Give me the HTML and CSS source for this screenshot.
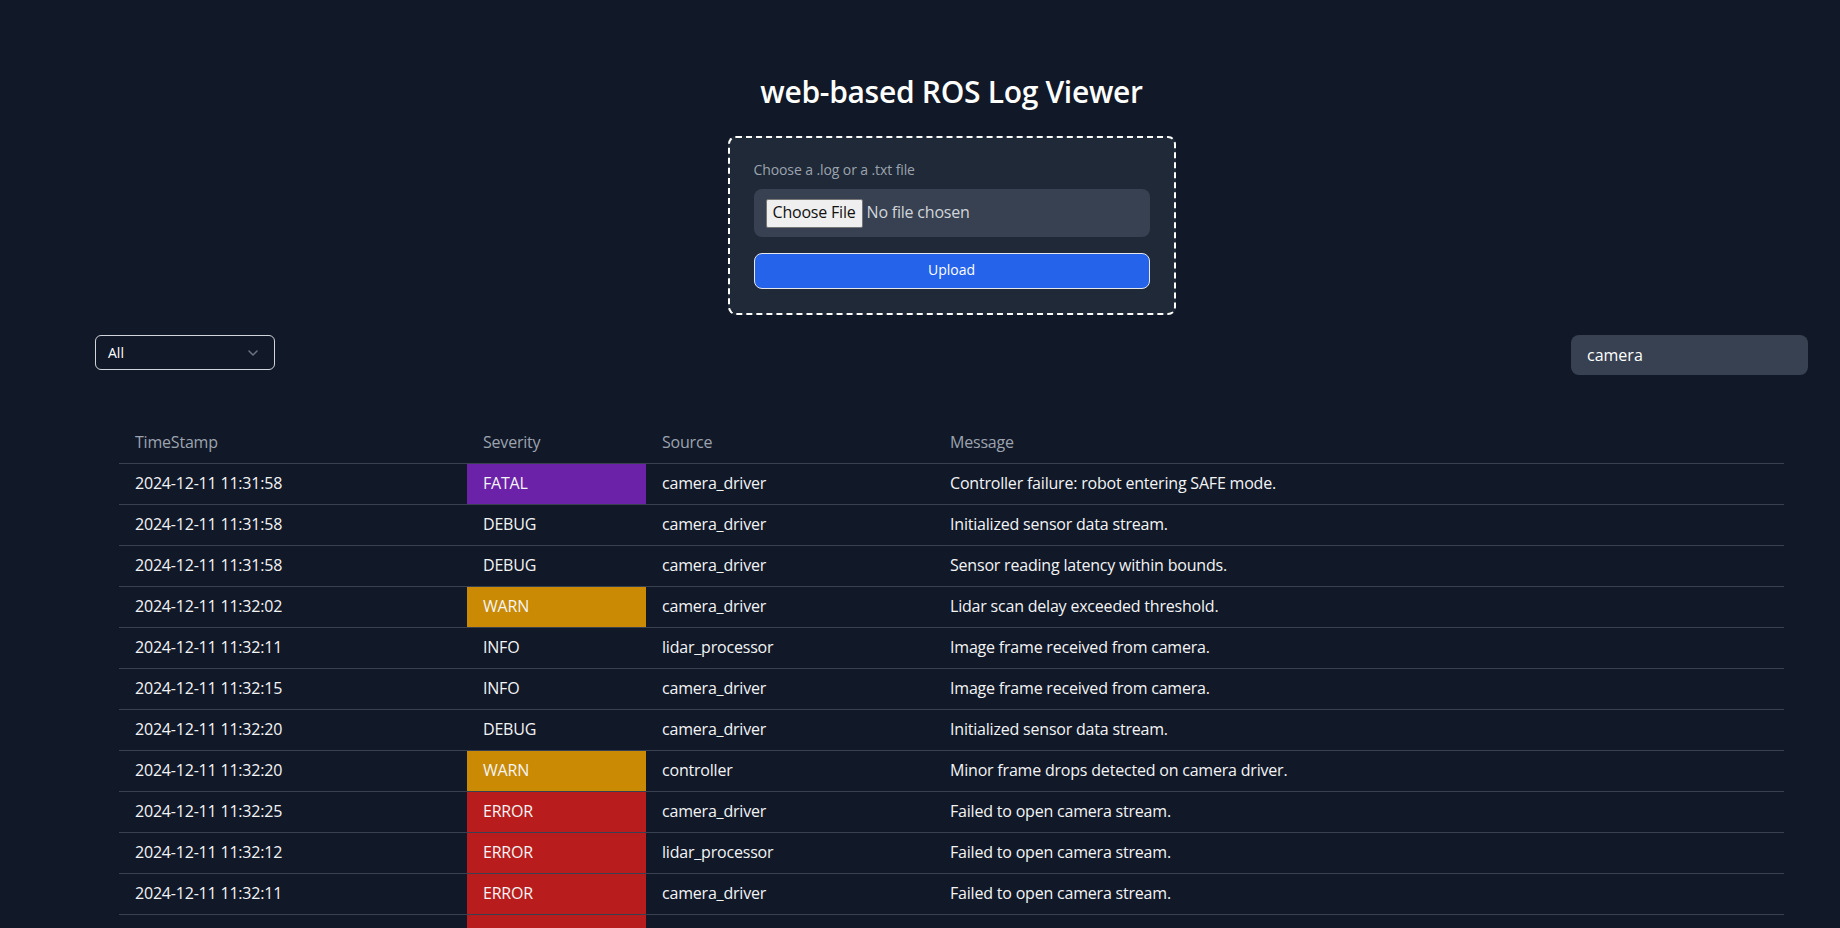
FILE: index.html
```
<!DOCTYPE html>
<html lang="en">
<head>
<meta charset="utf-8">
<title>web-based ROS Log Viewer</title>
<link rel="stylesheet" href="styles.css">
</head>
<body>
<main class="page">
  <h1 class="title">web-based ROS Log Viewer</h1>

  <form class="upload-box">
    <label class="upload-label">Choose a .log or a .txt file</label>
    <div class="file-field">
      <span class="file-btn">Choose File</span>
      <span class="file-name">No file chosen</span>
    </div>
    <button type="button" class="upload-btn">Upload</button>
  </form>

  <div class="filters">
    <div class="select">
      <span class="select-value">All</span>
      <svg class="chevron" width="10" height="6" viewBox="0 0 10 6" fill="none"><path d="M1 1l4 4 4-4" stroke="#6b7280" stroke-width="1.5" stroke-linecap="round" stroke-linejoin="round"/></svg>
    </div>
    <div class="search">camera</div>
  </div>

  <table class="log-table">
    <colgroup>
      <col class="c-time"><col class="c-sev"><col class="c-src"><col class="c-msg">
    </colgroup>
    <thead>
      <tr><th>TimeStamp</th><th>Severity</th><th>Source</th><th>Message</th></tr>
    </thead>
    <tbody>
      <tr><td>2024-12-11 11:31:58</td><td class="sev fatal">FATAL</td><td>camera_driver</td><td>Controller failure: robot entering SAFE mode.</td></tr>
      <tr><td>2024-12-11 11:31:58</td><td class="sev">DEBUG</td><td>camera_driver</td><td>Initialized sensor data stream.</td></tr>
      <tr><td>2024-12-11 11:31:58</td><td class="sev">DEBUG</td><td>camera_driver</td><td>Sensor reading latency within bounds.</td></tr>
      <tr><td>2024-12-11 11:32:02</td><td class="sev warn">WARN</td><td>camera_driver</td><td>Lidar scan delay exceeded threshold.</td></tr>
      <tr><td>2024-12-11 11:32:11</td><td class="sev">INFO</td><td>lidar_processor</td><td>Image frame received from camera.</td></tr>
      <tr><td>2024-12-11 11:32:15</td><td class="sev">INFO</td><td>camera_driver</td><td>Image frame received from camera.</td></tr>
      <tr><td>2024-12-11 11:32:20</td><td class="sev">DEBUG</td><td>camera_driver</td><td>Initialized sensor data stream.</td></tr>
      <tr><td>2024-12-11 11:32:20</td><td class="sev warn">WARN</td><td>controller</td><td>Minor frame drops detected on camera driver.</td></tr>
      <tr><td>2024-12-11 11:32:25</td><td class="sev error">ERROR</td><td>camera_driver</td><td>Failed to open camera stream.</td></tr>
      <tr><td>2024-12-11 11:32:12</td><td class="sev error">ERROR</td><td>lidar_processor</td><td>Failed to open camera stream.</td></tr>
      <tr><td>2024-12-11 11:32:11</td><td class="sev error">ERROR</td><td>camera_driver</td><td>Failed to open camera stream.</td></tr>
      <tr><td>2024-12-11 11:32:30</td><td class="sev error">ERROR</td><td>controller</td><td>Failed to open camera stream.</td></tr>
    </tbody>
  </table>
</main>
</body>
</html>
```

FILE: styles.css
```
* { box-sizing: border-box; }

html, body {
  margin: 0;
  background: #111827;
  color: #f3f4f6;
  font-family: "Open Sans", "Noto Sans", sans-serif;
}

.page {
  padding: 74px 32px 40px 95px;
  display: flex;
  flex-direction: column;
}

.title {
  margin: 0 0 26px;
  text-align: center;
  font-size: 30px;
  line-height: 36px;
  font-weight: 600;
  letter-spacing: -0.3px;
  color: #ffffff;
}

.upload-box {
  align-self: center;
  width: 448px;
  margin: 0;
  padding: 22px 24px 24px;
  background: #1f2937;
  border: 2px dashed #ffffff;
  border-radius: 8px;
  display: flex;
  flex-direction: column;
}

.upload-label {
  font-size: 14px;
  line-height: 19px;
  color: #9ca3af;
  margin-bottom: 10px;
  letter-spacing: -0.1px;
}

.file-field {
  height: 48px;
  background: #374151;
  border-radius: 8px;
  padding: 0 12px 3px;
  display: flex;
  align-items: center;
  gap: 4px;
  font-size: 16px;
  letter-spacing: -0.2px;
}

.file-btn {
  height: 29px;
  margin-top: 3px;
  padding: 0 6px 3px;
  background: #efefef;
  border: 1px solid #767676;
  border-radius: 2px;
  color: #111111;
  display: flex;
  align-items: center;
}

.file-name {
  color: #d1d5db;
}

.upload-btn {
  margin-top: 16px;
  height: 36px;
  padding: 0 0 3px;
  background: #2563eb;
  border: 1px solid #e5e7eb;
  border-radius: 8px;
  color: #ffffff;
  font-family: inherit;
  font-size: 14px;
  font-weight: 500;
}

.filters {
  margin-top: 20px;
  display: flex;
  justify-content: space-between;
  align-items: flex-start;
}

.select {
  width: 180px;
  height: 35px;
  border: 1px solid #d1d5db;
  border-radius: 6px;
  padding: 0 16px 0 12px;
  display: flex;
  align-items: center;
  justify-content: space-between;
  font-size: 14px;
  color: #ffffff;
}

.search {
  width: 237px;
  height: 40px;
  background: #374151;
  border-radius: 8px;
  padding: 0 16px;
  display: flex;
  align-items: center;
  font-size: 16px;
  color: #ffffff;
}

.log-table {
  margin: 48px 24px 0;
  width: calc(100% - 48px);
  border-collapse: collapse;
  table-layout: fixed;
  font-size: 16px;
  letter-spacing: -0.2px;
}

.c-time { width: 348px; }
.c-sev { width: 179px; }
.c-src { width: 288px; }

.log-table th {
  text-align: left;
  font-weight: 400;
  color: #9ca3af;
  padding: 7px 16px 9px;
  line-height: 24px;
  border-bottom: 1px solid #374151;
}

.log-table td {
  padding: 7px 16px 9px;
  line-height: 24px;
  color: #f3f4f6;
  border-bottom: 1px solid #374151;
  white-space: nowrap;
}

.log-table td.fatal { background: #6b21a8; }
.log-table td.warn { background: #ca8a04; }
.log-table td.error { background: #b91c1c; }
```
